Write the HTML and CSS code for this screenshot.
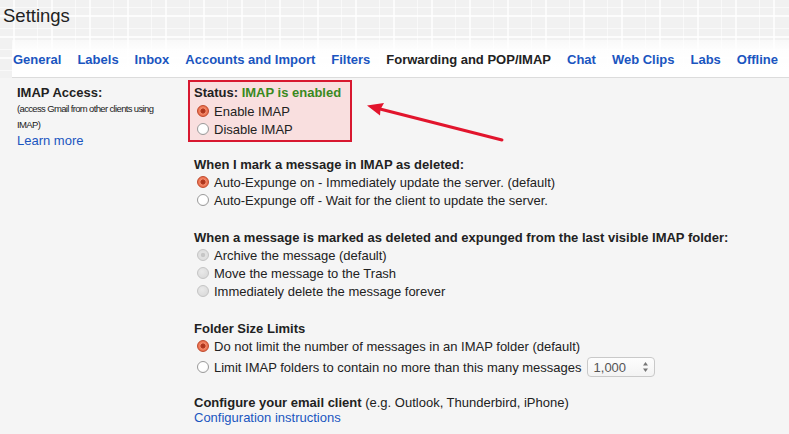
FILE: index.html
```html
<!DOCTYPE html>
<html>
<head>
<meta charset="utf-8">
<title>Settings</title>
<link rel="stylesheet" href="styles.css">
</head>
<body>
<div class="page">
  <div class="top">
    <h1 class="title">Settings</h1>
    <nav class="tabs">
      <a class="tab">General</a>
      <a class="tab">Labels</a>
      <a class="tab">Inbox</a>
      <a class="tab">Accounts and Import</a>
      <a class="tab">Filters</a>
      <span class="tab active">Forwarding and POP/IMAP</span>
      <a class="tab">Chat</a>
      <a class="tab">Web Clips</a>
      <a class="tab">Labs</a>
      <a class="tab">Offline</a>
    </nav>
  </div>

  <div class="content">
    <div class="label-col">
      <div class="label-title">IMAP Access:</div>
      <div class="label-note">(access Gmail from other clients using IMAP)</div>
      <a class="link learn">Learn more</a>
    </div>

    <div class="options">
      <div class="status-box">
        <div class="status-line"><b>Status: <span class="ok">IMAP is enabled</span></b></div>
        <div class="row"><span class="radio checked"></span>Enable IMAP</div>
        <div class="row"><span class="radio"></span>Disable IMAP</div>
      </div>

      <div class="group g1">
        <div class="heading">When I mark a message in IMAP as deleted:</div>
        <div class="row"><span class="radio checked"></span>Auto-Expunge on - Immediately update the server. (default)</div>
        <div class="row"><span class="radio"></span>Auto-Expunge off - Wait for the client to update the server.</div>
      </div>

      <div class="group">
        <div class="heading">When a message is marked as deleted and expunged from the last visible IMAP folder:</div>
        <div class="row"><span class="radio disabled dot"></span>Archive the message (default)</div>
        <div class="row"><span class="radio disabled"></span>Move the message to the Trash</div>
        <div class="row"><span class="radio disabled"></span>Immediately delete the message forever</div>
      </div>

      <div class="group">
        <div class="heading">Folder Size Limits</div>
        <div class="row"><span class="radio checked"></span>Do not limit the number of messages in an IMAP folder (default)</div>
        <div class="row tall"><span class="radio"></span>Limit IMAP folders to contain no more than this many messages
          <span class="numbox"><span class="numval">1,000</span>
            <svg class="spin" width="7" height="12" viewBox="0 0 7 12"><path d="M3.5 1 L6 4.5 H1 Z" fill="#777"/><path d="M3.5 11 L6 7.5 H1 Z" fill="#777"/></svg>
          </span>
        </div>
      </div>

      <div class="group last">
        <div class="heading cfg">Configure your email client <span class="normal">(e.g. Outlook, Thunderbird, iPhone)</span></div>
        <a class="link cfg-link">Configuration instructions</a>
      </div>
    </div>
  </div>

  <svg class="arrow" width="789" height="434" viewBox="0 0 789 434">
    <line x1="380" y1="109" x2="502" y2="140" stroke="#e2152d" stroke-width="3" stroke-linecap="round"/>
    <polygon points="367,105.5 384,103 380.5,109.3 380,115.5" fill="#e2152d"/>
  </svg>
</div>
</body>
</html>
```

FILE: styles.css
```css
html, body {
  margin: 0;
  padding: 0;
}
body {
  width: 789px;
  height: 434px;
  overflow: hidden;
  font-family: "Liberation Sans", Arial, sans-serif;
  font-size: 13px;
  color: #222;
  background: #f5f5f5;
}
.page {
  position: relative;
  width: 789px;
  height: 434px;
}
.top {
  background:
    repeating-linear-gradient(90deg, rgba(255,255,255,0) 0 13px, rgba(255,255,255,0.75) 13px 15px, rgba(255,255,255,0) 15px 37px, rgba(255,255,255,0.6) 37px 38px),
    repeating-linear-gradient(0deg, rgba(255,255,255,0) 0 7px, rgba(255,255,255,0.6) 7px 8px, rgba(255,255,255,0) 8px 19px, rgba(255,255,255,0.8) 19px 21px),
    #f1f1f1;
}
.title {
  margin: 0;
  height: 40px;
  box-sizing: border-box;
  padding: 5px 0 0 3px;
  font-size: 18.5px;
  line-height: 22px;
  font-weight: normal;
  color: #222;
}
.tabs {
  display: flex;
  gap: 16px;
  height: 38px;
  box-sizing: border-box;
  padding: 11px 0 0 1px;
  margin-left: 12px;
  border-bottom: 1px solid #dcdcdc;
  background: linear-gradient(to bottom, rgba(255,255,255,0.55) 0, rgba(255,255,255,0.9) 10px, #fff 30px);
  white-space: nowrap;
}
.tab {
  font-weight: bold;
  line-height: 17px;
  color: #1a55c0;
}
.tab.active {
  color: #222;
}
.content {
  display: grid;
  grid-template-columns: 194px 1fr;
  padding-top: 2px;
}
.label-col {
  padding: 4px 0 0 17px;
}
.label-title {
  font-weight: bold;
  line-height: 17px;
}
.label-note {
  width: 152px;
  font-size: 9.5px;
  letter-spacing: -0.65px;
  line-height: 16px;
  color: #222;
}
.link {
  color: #1a55c0;
  text-decoration: none;
}
.learn {
  display: block;
  line-height: 13px;
  margin-top: 1px;
}
.options {
  display: flex;
  flex-direction: column;
  align-items: flex-start;
}
.status-box {
  margin-left: -6px;
  width: 164px;
  box-sizing: border-box;
  padding: 2px 4px 2px 4px;
  border: 2px solid #d8182f;
  background: #f9dfdf;
}
.status-line {
  line-height: 18px;
}
.ok {
  color: #3a8a1e;
}
.row {
  display: flex;
  align-items: center;
  height: 18px;
  white-space: nowrap;
}
.row.tall {
  height: 24px;
}
.radio {
  flex: none;
  width: 12px;
  height: 12px;
  box-sizing: border-box;
  margin: 0 5px 0 3px;
  border-radius: 50%;
  border: 1px solid #9a9a9a;
  background: radial-gradient(circle at 40% 35%, #fff 0, #fff 55%, #e8e8e8 100%);
}
.radio.checked {
  border-color: #c0492c;
  background: radial-gradient(circle at 50% 50%, #a8321a 0, #b53a20 2.2px, #f28a6c 2.9px, #ef7a5a 4px, #e0633f 6px);
}
.radio.disabled {
  border-color: #c4c4c4;
  background: radial-gradient(circle at 40% 35%, #e9e9e9 0, #dcdcdc 70%, #d0d0d0 100%);
}
.radio.disabled.dot {
  background: radial-gradient(circle at 50% 50%, #c6c6c6 0, #c6c6c6 1.8px, #e2e2e2 2.6px, #dadada 100%);
}
.group {
  margin-top: 20px;
}
.group.g1 {
  margin-top: 14px;
}
.heading {
  font-weight: bold;
  line-height: 17px;
  white-space: nowrap;
}
.heading .normal {
  font-weight: normal;
}
.numbox {
  display: inline-flex;
  align-items: center;
  justify-content: space-between;
  margin-left: 5px;
  width: 68px;
  height: 20px;
  box-sizing: border-box;
  padding: 0 5px 0 6px;
  border: 1px solid #c9c9c9;
  border-radius: 4px;
  background: linear-gradient(to bottom, #fdfdfd, #f3f3f3);
}
.numval {
  color: #555;
}
.spin {
  display: block;
}
.group.last {
  margin-top: 16px;
}
.cfg {
  line-height: 16px;
}
.cfg-link {
  display: block;
  line-height: 14px;
}
.arrow {
  position: absolute;
  left: 0;
  top: 0;
  pointer-events: none;
}
```
